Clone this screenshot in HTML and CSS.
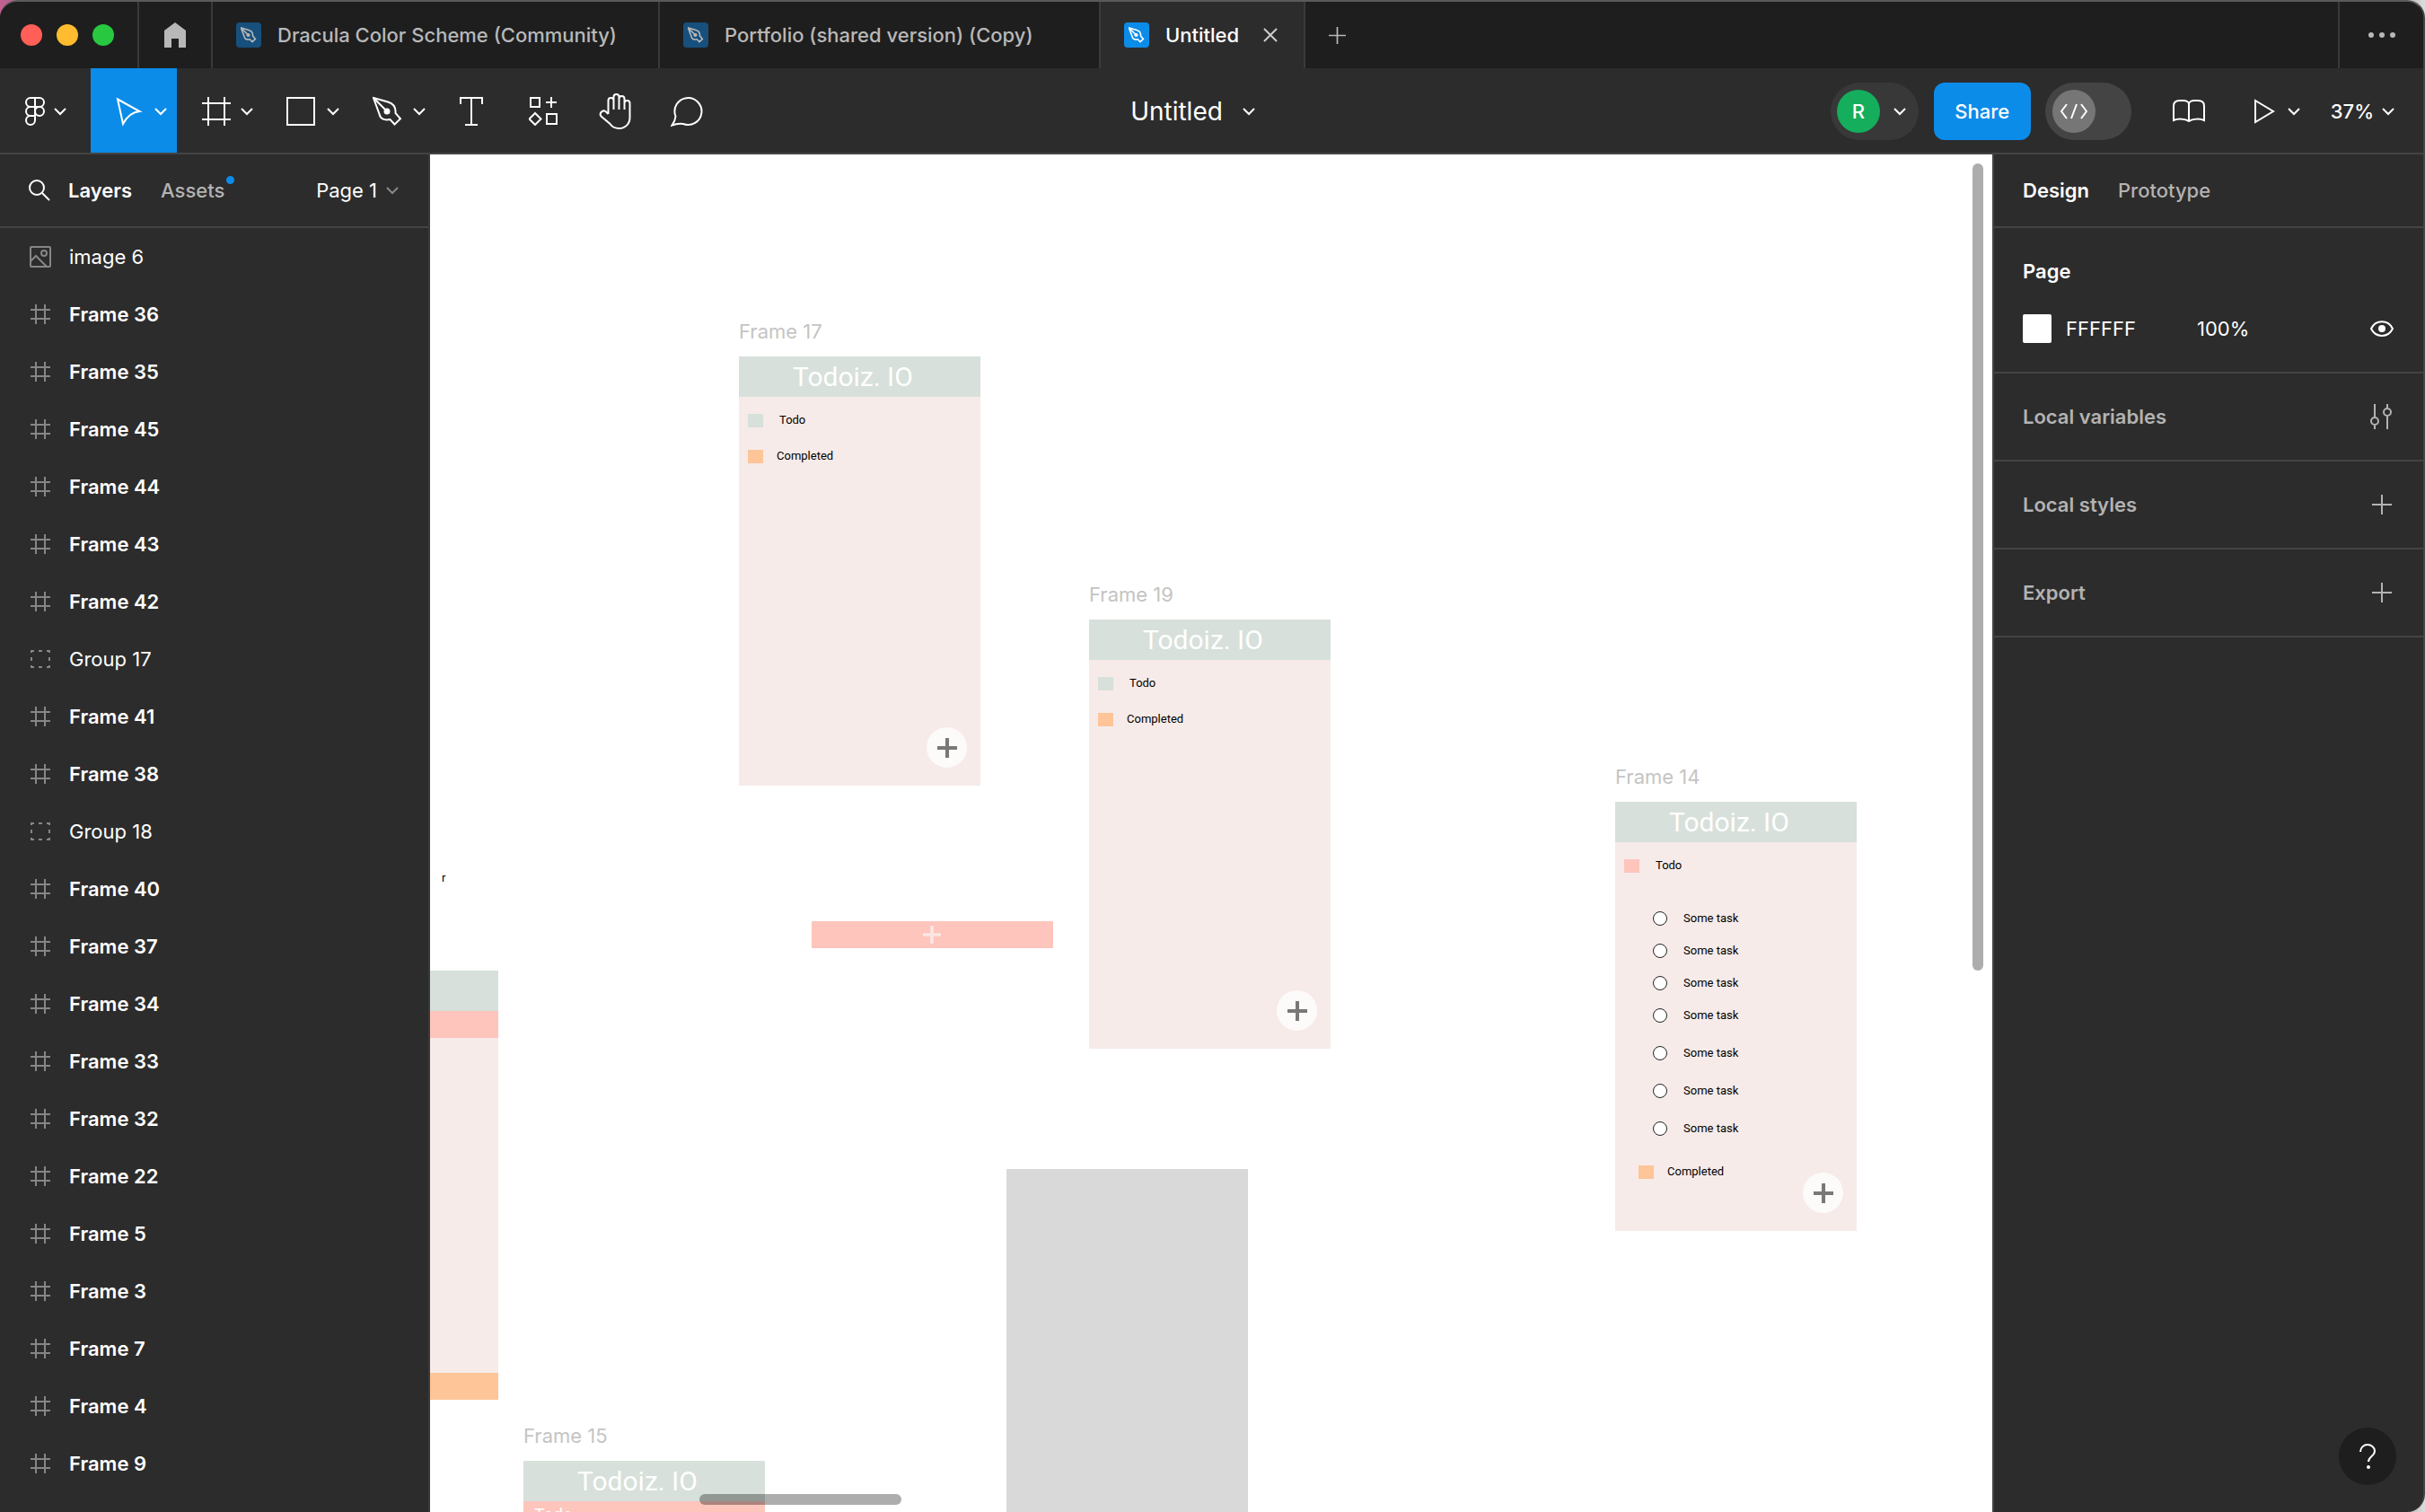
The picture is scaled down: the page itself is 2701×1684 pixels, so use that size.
FILE: index.html
```html
<!DOCTYPE html>
<html lang="en">
<head>
<meta charset="utf-8">
<title>Untitled</title>
<link rel="stylesheet" href="styles.css">
</head>
<body>
<svg class="sprite" aria-hidden="true">
  <symbol id="chevron" viewBox="0 0 14 14"><path d="M1 4l6 6 6-6"/></symbol>
  <symbol id="pen" viewBox="0 0 34 34"><path d="M1 2l16 4.500c7 2 9 7 8.500 12.500l5.500 6.300-6.500 6.200-5-5.500c-7 1.500-11-1-12-6z"/><path d="M1 2l15 15"/><circle class="solid" cx="16" cy="17" r="2.500"/></symbol>
  <symbol id="plus" viewBox="0 0 22 22"><path d="M11 0v22M0 11h22"/></symbol>
  <symbol id="hash" viewBox="0 0 24 24"><path d="M7 1v22M17 1v22M1 7h22M1 17h22"/></symbol>
  <symbol id="group" viewBox="0 0 24 24"><path d="M2 5V3h3M10 3h4M19 3h3v2M22 10v4M22 19v2h-3M14 21h-4M5 21H2v-2M2 14v-4"/></symbol>
  <symbol id="picture" viewBox="0 0 24 24"><rect x="1" y="1" width="22" height="22" rx="1"/><circle cx="16" cy="8" r="3"/><path d="M1 17l6-6 12 12"/></symbol>
</svg>

<div class="app">
  <header class="tabbar">
    <div class="lights"><span class="light red"></span><span class="light yellow"></span><span class="light green"></span></div>
    <button class="home" aria-label="Home"><svg width="24" height="28" viewBox="0 0 24 28"><path d="M12 0l12 9v19h-8V18H8v10H0V9z"/></svg></button>
    <button class="tab first"><span class="file"><svg width="18" height="18"><use href="#pen"/></svg></span>Dracula Color Scheme (Community)</button>
    <button class="tab second"><span class="file"><svg width="18" height="18"><use href="#pen"/></svg></span>Portfolio (shared version) (Copy)</button>
    <button class="tab active"><span class="file"><svg width="18" height="18"><use href="#pen"/></svg></span>Untitled<svg class="close" width="16" height="16" viewBox="0 0 16 16"><path d="M1 1l14 14M15 1L1 15"/></svg></button>
    <button class="new-tab" aria-label="New tab"><svg width="19" height="19"><use href="#plus"/></svg></button>
    <button class="more" aria-label="More"><svg width="26" height="8" viewBox="0 0 26 8"><circle cx="3" cy="4" r="3"/><circle cx="15" cy="4" r="3"/><circle cx="27" cy="4" r="3"/></svg></button>
  </header>

  <div class="toolbar">
    <div class="tools">
      <button class="tool menu" aria-label="Main menu"><svg width="22" height="32" viewBox="0 0 22 32"><path d="M11 1H6a5 5 0 0 0 0 10h5zM11 1h5a5 5 0 0 1 0 10h-5M11 11H6a5 5 0 0 0 0 10h5zM11 21H6a5 5 0 1 0 5 5z"/><circle cx="16" cy="16" r="5"/></svg><svg class="chev" width="14" height="14"><use href="#chevron"/></svg></button>
      <button class="tool split selected" aria-label="Move"><svg width="34" height="34" viewBox="0 0 34 34"><path d="M4 3.500L28.500 17Q17 18 10 31z"/></svg><svg class="chev" width="14" height="14"><use href="#chevron"/></svg></button>
      <button class="tool split" aria-label="Frame"><svg width="34" height="34" viewBox="0 0 34 34"><path d="M9 1v32M27 1v32M2 8h32M2 26h32"/></svg><svg class="chev" width="14" height="14"><use href="#chevron"/></svg></button>
      <button class="tool split" aria-label="Rectangle"><svg width="34" height="34" viewBox="0 0 34 34"><rect x="1" y="2" width="30" height="30"/></svg><svg class="chev" width="14" height="14"><use href="#chevron"/></svg></button>
      <button class="tool split" aria-label="Pen"><svg width="34" height="34"><use href="#pen"/></svg><svg class="chev" width="14" height="14"><use href="#chevron"/></svg></button>
      <button class="tool" aria-label="Text"><svg width="26" height="32" viewBox="0 0 26 32"><path d="M1 8V1h24v7M13 1v30M6 31h14"/></svg></button>
      <button class="tool" aria-label="Resources"><svg width="32" height="32" viewBox="0 0 32 32"><path d="M2 1h10v10H2zM20 19h11v11H20zM25 0v12M19 6h12M7 18l6.500 6.500L7 31 .5 24.500z"/></svg></button>
      <button class="tool" aria-label="Hand"><svg width="36" height="40" viewBox="0 0 36 40"><path d="M10.500 23V8a3 3 0 0 1 6 0v10M16.500 8V4a3 3 0 0 1 6 0v14M22.500 6a3 3 0 0 1 6 0v12M28.500 11a3 3 0 0 1 6 0v16c0 7-5 12-12 12-5 0-8-2-10-5L2.500 25.500c-2.500-3.500 1.500-7.500 5-5.500l3 3"/></svg></button>
      <button class="tool" aria-label="Comment"><svg width="36" height="34" viewBox="0 0 36 34"><path d="M5.500 22.500A15 15 0 1 1 14 31Q8 30 1.500 32.500 5 28 5.500 22.500z"/></svg></button>
    </div>
    <button class="doc-title">Untitled<svg class="chev" width="14" height="14"><use href="#chevron"/></svg></button>
    <div class="actions">
      <button class="account"><span class="avatar">R</span><svg class="chev" width="14" height="14"><use href="#chevron"/></svg></button>
      <button class="share">Share</button>
      <label class="dev-mode"><input type="checkbox" aria-label="Dev Mode"><span class="knob"><svg width="30" height="20" viewBox="0 0 30 20"><path d="M7 2L1 10l6 8M23 2l6 8-6 8M18 2l-6 16"/></svg></span></label>
      <button class="book" aria-label="Libraries"><svg width="36" height="26" viewBox="0 0 36 26"><path d="M18 5c0-2.500-3-4-6-4H8C4 1 1 3 1 7v16c4-2 13-2 17 1 4-3 13-3 17-1V7c0-4-3-6-7-6h-4c-3 0-6 1.500-6 4zM18 5v19"/></svg></button>
      <button class="play" aria-label="Present"><svg width="24" height="28" viewBox="0 0 24 28"><path d="M2 2l20 12L2 26z"/></svg><svg class="chev" width="14" height="14"><use href="#chevron"/></svg></button>
      <button class="zoom">37%<svg class="chev" width="14" height="14"><use href="#chevron"/></svg></button>
    </div>
  </div>

  <div class="workspace">
    <aside class="panel layers">
      <div class="panel-head">
        <button class="search" aria-label="Search"><svg width="24" height="24" viewBox="0 0 24 24"><circle cx="9" cy="9" r="8"/><path d="M15 15l8 8"/></svg></button>
        <button class="ptab on">Layers</button>
        <button class="ptab assets">Assets<span class="dot"></span></button>
        <button class="page-menu">Page 1<svg class="chev" width="14" height="14"><use href="#chevron"/></svg></button>
      </div>
      <ul class="layer-list">
        <li><svg class="licon"><use href="#picture"/></svg>image 6</li>
        <li class="frame"><svg class="licon"><use href="#hash"/></svg>Frame 36</li>
        <li class="frame"><svg class="licon"><use href="#hash"/></svg>Frame 35</li>
        <li class="frame"><svg class="licon"><use href="#hash"/></svg>Frame 45</li>
        <li class="frame"><svg class="licon"><use href="#hash"/></svg>Frame 44</li>
        <li class="frame"><svg class="licon"><use href="#hash"/></svg>Frame 43</li>
        <li class="frame"><svg class="licon"><use href="#hash"/></svg>Frame 42</li>
        <li><svg class="licon"><use href="#group"/></svg>Group 17</li>
        <li class="frame"><svg class="licon"><use href="#hash"/></svg>Frame 41</li>
        <li class="frame"><svg class="licon"><use href="#hash"/></svg>Frame 38</li>
        <li><svg class="licon"><use href="#group"/></svg>Group 18</li>
        <li class="frame"><svg class="licon"><use href="#hash"/></svg>Frame 40</li>
        <li class="frame"><svg class="licon"><use href="#hash"/></svg>Frame 37</li>
        <li class="frame"><svg class="licon"><use href="#hash"/></svg>Frame 34</li>
        <li class="frame"><svg class="licon"><use href="#hash"/></svg>Frame 33</li>
        <li class="frame"><svg class="licon"><use href="#hash"/></svg>Frame 32</li>
        <li class="frame"><svg class="licon"><use href="#hash"/></svg>Frame 22</li>
        <li class="frame"><svg class="licon"><use href="#hash"/></svg>Frame 5</li>
        <li class="frame"><svg class="licon"><use href="#hash"/></svg>Frame 3</li>
        <li class="frame"><svg class="licon"><use href="#hash"/></svg>Frame 7</li>
        <li class="frame"><svg class="licon"><use href="#hash"/></svg>Frame 4</li>
        <li class="frame"><svg class="licon"><use href="#hash"/></svg>Frame 9</li>
      </ul>
    </aside>

    <main class="canvas">
      <section class="node frame17">
        <h2 class="node-label">Frame 17</h2>
        <div class="artboard">
          <div class="bar">Todoiz. IO</div>
          <div class="art-body">
            <div class="item todo"><span class="swatch mint"></span>Todo</div>
            <div class="item done"><span class="swatch orange"></span>Completed</div>
          </div>
          <button class="fab" aria-label="Add"><svg width="22" height="22"><use href="#plus"/></svg></button>
        </div>
      </section>
      <section class="node frame19">
        <h2 class="node-label">Frame 19</h2>
        <div class="artboard">
          <div class="bar">Todoiz. IO</div>
          <div class="art-body">
            <div class="item todo"><span class="swatch mint"></span>Todo</div>
            <div class="item done"><span class="swatch orange"></span>Completed</div>
          </div>
          <button class="fab" aria-label="Add"><svg width="22" height="22"><use href="#plus"/></svg></button>
        </div>
      </section>
      <section class="node frame14">
        <h2 class="node-label">Frame 14</h2>
        <div class="artboard">
          <div class="bar">Todoiz. IO</div>
          <div class="art-body">
            <div class="item todo"><span class="swatch pink"></span>Todo</div>
            <div class="tasks">
              <label class="task"><input type="checkbox">Some task</label>
              <label class="task"><input type="checkbox">Some task</label>
              <label class="task"><input type="checkbox">Some task</label>
              <label class="task"><input type="checkbox">Some task</label>
              <label class="task loose"><input type="checkbox">Some task</label>
              <label class="task loose"><input type="checkbox">Some task</label>
              <label class="task loose"><input type="checkbox">Some task</label>
            </div>
            <div class="item done nested"><span class="swatch orange"></span>Completed</div>
          </div>
          <button class="fab" aria-label="Add"><svg width="22" height="22"><use href="#plus"/></svg></button>
        </div>
      </section>
      <section class="node frame15">
        <h2 class="node-label">Frame 15</h2>
        <div class="artboard">
          <div class="bar">Todoiz. IO</div>
          <div class="band">Todo</div>
        </div>
      </section>
      <div class="node cut">
        <div class="bar"></div>
        <div class="band"></div>
        <div class="fill"></div>
        <div class="band amber"></div>
      </div>
      <div class="node stray">r</div>
      <div class="node add-row"><svg width="20" height="20" viewBox="0 0 22 22"><use href="#plus"/></svg></div>
      <div class="node grey-box"></div>
      <div class="scroll vertical"></div>
      <div class="scroll horizontal"></div>
    </main>

    <aside class="panel design">
      <div class="panel-head">
        <button class="ptab on">Design</button>
        <button class="ptab">Prototype</button>
      </div>
      <section class="page-props">
        <h2>Page</h2>
        <div class="color-row">
          <button class="color" aria-label="Page colour"></button>
          <input class="hex" type="text" value="FFFFFF" aria-label="Hex">
          <input class="alpha" type="text" value="100%" aria-label="Opacity">
          <button class="eye" aria-label="Toggle visibility"><svg width="26" height="18" viewBox="0 0 26 18"><path d="M1 9c5-10.500 19-10.500 24 0-5 10.500-19 10.500-24 0z"/><circle class="solid" cx="13" cy="9" r="3"/></svg></button>
        </div>
      </section>
      <section class="prop"><h2>Local variables</h2><button aria-label="Open variables"><svg width="24" height="28" viewBox="0 0 24 28"><path d="M5 0v14M5 24v4M19 0v4M19 14v14"/><circle cx="5" cy="19" r="4"/><circle cx="19" cy="9" r="4"/></svg></button></section>
      <section class="prop"><h2>Local styles</h2><button aria-label="Add style"><svg width="22" height="22"><use href="#plus"/></svg></button></section>
      <section class="prop"><h2>Export</h2><button aria-label="Add export"><svg width="22" height="22"><use href="#plus"/></svg></button></section>
    </aside>
  </div>
  <button class="help" aria-label="Help"><svg width="18" height="28" viewBox="0 0 18 28"><path d="M1 9c0-5 4-8 8-8s8 3 8 7c0 6-7 6-7 12"/><circle class="solid" cx="10" cy="26" r="1"/></svg></button>
</div>
</body>
</html>
```
FILE: styles.css
```css
* { box-sizing: border-box; }
body {
  margin: 0;
  background: linear-gradient(90deg, #c45f94, #777 2%, #777 98%, #ddd);
  font: 500 22px/32px Inter, "Liberation Sans", sans-serif;
  color: #fff;
}
button {
  margin: 0; padding: 0; border: 0; background: none;
  color: inherit; font: inherit;
  display: flex; align-items: center; flex: none;
}
h2, ul { margin: 0; padding: 0; font: inherit; list-style: none; }
svg { fill: none; stroke: currentColor; stroke-width: 2; flex: none; display: block; }
.solid { fill: currentColor; }
.sprite { position: absolute; width: 0; height: 0; }

.app {
  position: relative;
  display: flex; flex-direction: column;
  height: 100vh; overflow: hidden;
  background: #2c2c2c;
  border-top: 2px solid #5a5a5a;
  border-right: 2px solid #444;
  border-radius: 20px 20px 20px 0;
}

/* Window tabs */
.tabbar { display: flex; flex: none; height: 74px; background: #1e1e1e; color: #b8b8b8; }
.lights { display: flex; align-items: center; gap: 16px; width: 153px; padding-left: 23px; }
.light { width: 24px; height: 24px; border-radius: 50%; }
.red { background: #ff5f57; }
.yellow { background: #febc2e; }
.green { background: #28c840; }
.home, .tab, .more { border-left: 2px solid #3a3a3a; }
.home { width: 82px; justify-content: center; }
.home svg, .more svg { fill: currentColor; stroke: none; overflow: visible; }
.tab { padding-left: 26px; white-space: nowrap; }
.tab.first { width: 498px; }
.tab.second { width: 491px; }
.tab.active { width: 230px; background: #2c2c2c; color: #fff; border-right: 2px solid #3a3a3a; }
.file {
  display: grid; place-items: center;
  width: 28px; height: 28px; margin-right: 18px;
  border-radius: 4px; background: #17507d;
}
.active .file { background: #0c8ce9; }
.file svg { stroke-width: 3; }
.close { margin-left: 27px; color: #ccc; }
.new-tab { padding: 0 26px; }
.more { width: 95px; margin-left: auto; padding-left: 32px; }

/* Toolbar */
.toolbar {
  display: grid; grid-template-columns: 1fr auto 1fr;
  flex: none; height: 96px;
  border-bottom: 2px solid #444;
}
.tools, .actions { display: flex; }
.tool { width: 80px; padding-top: 2px; justify-content: center; }
.menu { width: 101px; padding-left: 28px; gap: 10px; justify-content: flex-start; }
.split { width: 96px; padding-left: 26px; gap: 11px; justify-content: flex-start; }
.selected { background: #0c8ce9; }
.doc-title { gap: 22px; padding: 2px 42px 0 0; font-size: 28px; font-weight: 400; }
.actions { justify-content: flex-end; align-items: center; padding: 2px 32px 0 0; }
.account { width: 98px; height: 64px; padding-left: 7px; gap: 15px; border-radius: 32px; background: #383838; }
.avatar { width: 48px; height: 48px; border-radius: 50%; background: #14ae5c; line-height: 48px; }
.share { width: 108px; height: 64px; margin: 0 16px 0 17px; border-radius: 12px; background: #0c8ce9; justify-content: center; }
.dev-mode { display: flex; width: 96px; height: 64px; padding: 8px; border-radius: 32px; background: #444; }
.dev-mode input { appearance: none; width: 0; height: 0; margin: 0; }
.knob { display: grid; place-items: center; width: 48px; height: 48px; border-radius: 50%; background: #767676; }
.book { margin: 0 54px 0 46px; }
.play { gap: 14px; }
.zoom { gap: 9px; margin-left: 34px; }

/* Side panels */
.workspace { display: grid; grid-template-columns: 479px 1fr 480px; flex: 1; min-height: 0; }
.layers { border-right: 2px solid #3a3a3a; }
.design { border-left: 2px solid #444; }
.panel-head { display: flex; align-items: center; height: 82px; border-bottom: 2px solid #444; padding-left: 32px; gap: 32px; }
.ptab { color: #b3b3b3; }
.ptab.on { color: #fff; font-weight: 600; }
.search { margin-right: -12px; }
.assets { position: relative; }
.dot { position: absolute; left: 100%; top: 0; width: 9px; height: 9px; margin-left: 2px; border-radius: 50%; background: #0c8ce9; }
.page-menu { gap: 10px; margin: 0 33px 0 auto; font-weight: 400; }
.page-menu .chev { color: #888; }
.layer-list li { display: flex; align-items: center; height: 64px; padding-left: 33px; gap: 20px; font-weight: 400; }
.layer-list .frame { font-weight: 600; }
.licon { width: 24px; height: 24px; color: #868686; }
.page-props { height: 162px; padding: 32px 33px 32px 32px; border-bottom: 2px solid #444; }
.page-props h2 { font-weight: 600; }
.color-row { display: flex; align-items: center; height: 32px; margin-top: 32px; }
.color { width: 32px; height: 32px; border-radius: 2px; background: #fff; }
.color-row input { border: 0; padding: 0; background: none; color: #fff; font: inherit; font-weight: 400; }
.hex { width: 146px; margin-left: 16px; }
.alpha { width: 80px; }
.eye { margin-left: auto; }
.prop { display: flex; align-items: center; justify-content: space-between; height: 98px; padding: 0 35px 0 32px; border-bottom: 2px solid #444; color: #b3b3b3; }
.prop h2 { font-weight: 600; }
.help {
  position: absolute; right: 30px; bottom: 30px;
  width: 64px; height: 64px; justify-content: center;
  border-radius: 50%; background: #1e1e1e;
}

/* Canvas */
.canvas { position: relative; overflow: hidden; background: #fff; color: #000; }
.node { position: absolute; width: 269px; }
.frame17 { left: 344px; top: 183px; }
.frame19 { left: 734px; top: 476px; }
.frame14 { left: 1320px; top: 679px; }
.frame15 { left: 104px; top: 1413px; }
.node-label { height: 42px; line-height: 28px; font-weight: 400; color: #c4c4c4; }
.artboard { position: relative; height: 478px; background: #f6ebe9; font: 400 13px/20px Roboto, sans-serif; }
.bar { height: 45px; padding-left: 60px; background: #d7e0da; color: #fff; font-size: 30px; line-height: 45px; }
.art-body { padding: 16px 10px; }
.item { display: flex; align-items: center; gap: 15px; height: 20px; }
.item.todo { gap: 18px; margin-bottom: 20px; }
.item.nested { margin: 28px 0 0 16px; }
.swatch { width: 17px; height: 15px; }
.mint { background: #d7e0da; }
.orange { background: #fdc598; }
.pink { background: #fdc5bc; }
.tasks { display: flex; flex-direction: column; gap: 16px; padding: 19px 0 0 32px; }
.task { display: flex; align-items: center; gap: 18px; height: 20px; }
.loose { margin-top: 6px; }
.task input { appearance: none; width: 16px; height: 16px; margin: 0; border: 1px solid #222; border-radius: 50%; background: #fff; }
.fab {
  position: absolute; right: 15px; bottom: 20px;
  width: 45px; height: 45px; justify-content: center;
  border-radius: 50%; background: #fdfafa; color: #7c7777;
}
.fab svg { stroke-width: 4; }
.band { height: 30px; padding-left: 12px; background: #fdc5bc; color: #fff; font-size: 19px; line-height: 30px; }
.amber { background: #fdc598; }
.cut { left: 0; top: 909px; width: 76px; }
.fill { height: 373px; background: #f6ebe9; }
.stray { left: 13px; top: 796px; width: 10px; font: 400 13px/20px Roboto, sans-serif; }
.add-row { left: 425px; top: 854px; height: 30px; padding-left: 124px; display: flex; align-items: center; background: #fdc5bc; color: #fbe6e2; }
.add-row svg { stroke-width: 4; }
.grey-box { left: 642px; top: 1130px; height: 478px; background: #d9d9d9; }
.scroll { position: absolute; border-radius: 6px; background: rgba(0, 0, 0, .32); }
.vertical { right: 10px; top: 10px; width: 12px; height: 899px; }
.horizontal { left: 300px; bottom: 8px; width: 225px; height: 12px; }
```
